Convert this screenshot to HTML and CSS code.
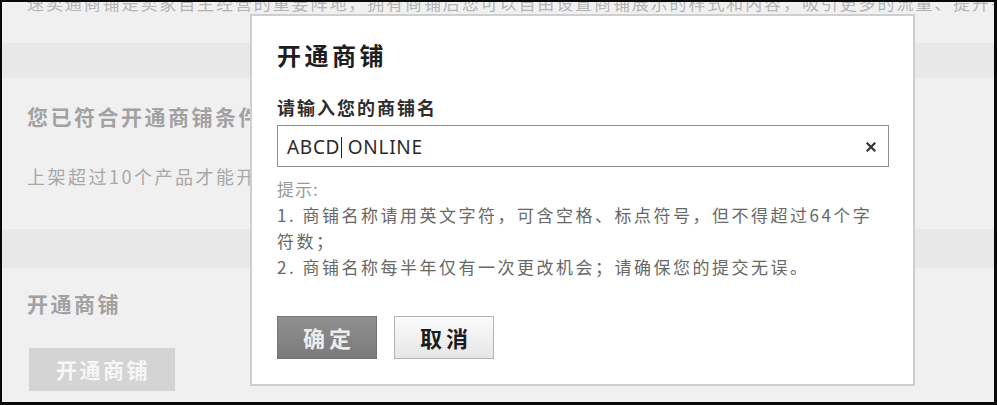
FILE: index.html
```html
<!DOCTYPE html>
<html lang="zh-CN">
<head>
<meta charset="utf-8">
<title>开通商铺</title>
<link rel="stylesheet" href="styles.css">
</head>
<body>
<div class="frame">
  <div class="intro">
    <p class="intro-text">速卖通商铺是卖家自主经营的重要阵地，拥有商铺后您可以自由设置商铺展示的样式和内容，吸引更多的流量、提升销量。</p>
  </div>
  <div class="band band-a"></div>
  <div class="sec sec-cond">
    <h2 class="sec-title">您已符合开通商铺条件</h2>
    <p class="sec-desc">上架超过10个产品才能开通商铺</p>
  </div>
  <div class="band band-b"></div>
  <div class="sec sec-open">
    <h2 class="sec-title">开通商铺</h2>
    <div class="btn-disabled">开通商铺</div>
  </div>

  <div class="dialog">
    <h1 class="dlg-title">开通商铺</h1>
    <div class="dlg-label">请输入您的商铺名</div>
    <div class="field">
      <span class="field-text">ABCD</span><span class="caret"></span><span class="field-text">&nbsp;ONLINE</span>
      <svg class="clear" width="10" height="10" viewBox="0 0 10 10"><path d="M1.5 1.5 L8.5 8.5 M8.5 1.5 L1.5 8.5" stroke="#333" stroke-width="2.2" stroke-linecap="square"/></svg>
    </div>
    <div class="hints">
      <div class="hint-head">提示:</div>
      <div class="hint-line">1. 商铺名称请用英文字符，可含空格、标点符号，但不得超过64个字<br>符数；</div>
      <div class="hint-line">2. 商铺名称每半年仅有一次更改机会；请确保您的提交无误。</div>
    </div>
    <div class="actions">
      <div class="btn btn-ok">确定</div>
      <div class="btn btn-cancel">取消</div>
    </div>
  </div>
</div>
</body>
</html>
```

FILE: styles.css
```css
html, body {
  margin: 0;
  padding: 0;
  background: #fff;
}

body {
  font-family: "Noto Sans CJK SC", "Noto Sans", sans-serif;
}

.frame {
  position: relative;
  width: 997px;
  height: 405px;
  box-sizing: border-box;
  border-style: solid;
  border-color: #0a0a0a;
  border-width: 2px 3px 3px 2px;
  background: #f0f0f0;
  overflow: hidden;
}

.intro {
  height: 41px;
  overflow: hidden;
  padding-left: 25px;
}

.intro-text {
  margin: -9px 0 0;
  font-size: 17px;
  line-height: 20px;
  letter-spacing: 1.9px;
  color: #b4b4b4;
  white-space: nowrap;
}

.band {
  background: #e8e8e8;
}

.band-a {
  height: 35px;
}

.band-b {
  height: 39px;
}

.sec {
  box-sizing: border-box;
  padding-left: 25px;
}

.sec-cond {
  height: 151px;
  padding-top: 23px;
}

.sec-open {
  padding-top: 20px;
}

.sec-title {
  margin: 0;
  font-size: 21px;
  line-height: 30px;
  font-weight: 700;
  letter-spacing: 2.5px;
  color: #a2a2a2;
  white-space: nowrap;
}

.sec-desc {
  margin: 33px 0 0;
  font-size: 18px;
  line-height: 24px;
  letter-spacing: 2.5px;
  color: #a8a8a8;
  white-space: nowrap;
}

.btn-disabled {
  margin: 30px 0 0 2px;
  width: 146px;
  height: 43px;
  background: #d4d4d4;
  color: #f6f6f6;
  font-size: 21px;
  font-weight: 700;
  letter-spacing: 2.5px;
  line-height: 43px;
  text-align: center;
  padding-left: 2px;
  box-sizing: border-box;
}

.dialog {
  position: absolute;
  left: 248px;
  top: 12px;
  width: 665px;
  height: 372px;
  box-sizing: border-box;
  background: #fff;
  border: 2px solid #cfcfcf;
  padding: 22px 25px 0;
}

.dlg-title {
  margin: 0;
  font-size: 24px;
  line-height: 33px;
  font-weight: 700;
  letter-spacing: 3.5px;
  color: #1e1e1e;
}

.dlg-label {
  margin-top: 24px;
  font-size: 18px;
  line-height: 24px;
  font-weight: 700;
  letter-spacing: 2px;
  color: #2e2e2e;
}

.field {
  margin-top: 6px;
  width: 612px;
  height: 42px;
  box-sizing: border-box;
  border: 1px solid #8e8e8e;
  display: flex;
  align-items: center;
  padding: 2px 0 0 9px;
}

.field-text {
  font-family: "Noto Sans", "Open Sans", sans-serif;
  font-size: 19px;
  letter-spacing: 0.7px;
  color: #2a2a2a;
  white-space: pre;
}

.caret {
  display: inline-block;
  width: 1px;
  height: 21px;
  background: #222;
  margin-left: 1px;
}

.clear {
  margin-left: auto;
  margin-right: 12px;
  display: block;
}

.hints {
  margin-top: 9px;
  font-size: 17px;
  line-height: 26px;
  letter-spacing: 2.5px;
  white-space: nowrap;
}

.hint-head {
  color: #9a9a9a;
  letter-spacing: 1px;
}

.hint-line {
  color: #686868;
}

.actions {
  margin-top: 36px;
  display: flex;
  gap: 17px;
}

.btn {
  width: 100px;
  height: 43px;
  box-sizing: border-box;
  font-size: 22px;
  font-weight: 700;
  letter-spacing: 4px;
  padding-left: 4px;
  line-height: 41px;
  text-align: center;
}

.btn-ok {
  background: linear-gradient(#909090, #7a7a7a);
  border: 1px solid #747474;
  color: #ececec;
}

.btn-cancel {
  background: linear-gradient(#fbfbfb, #e6e6e6);
  border: 1px solid #b3b3b3;
  color: #1c1c1c;
}
```
